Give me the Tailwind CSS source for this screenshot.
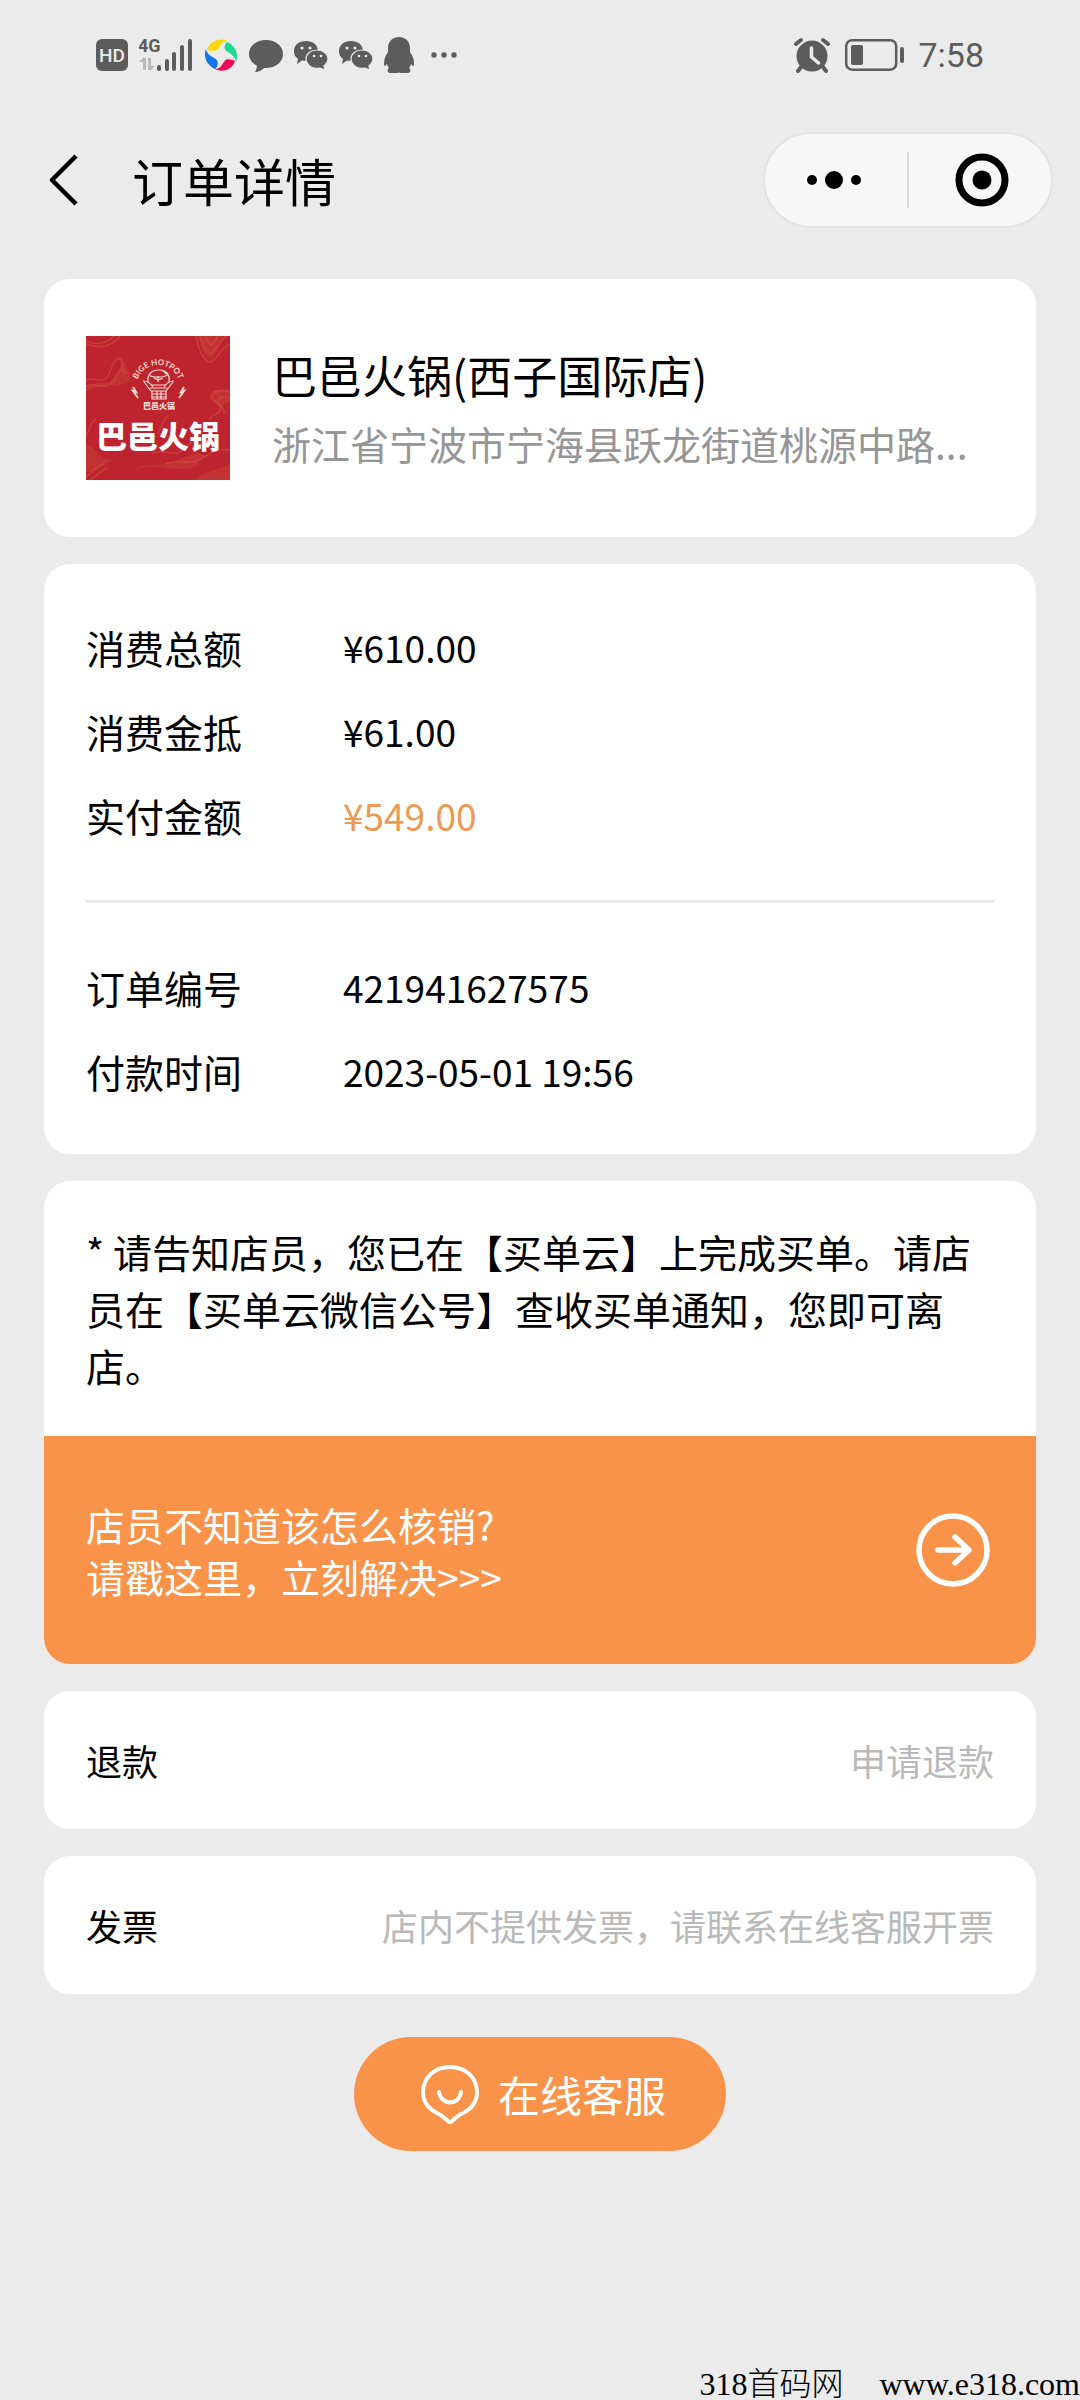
<!DOCTYPE html>
<html lang="zh-CN">
<head>
<meta charset="utf-8">
<meta name="viewport" content="width=device-width, initial-scale=1">
<title>订单详情</title>
<script src="https://cdn.jsdelivr.net/npm/@tailwindcss/browser@4"></script>
</head>
<body class="flex min-h-screen flex-col bg-[#ebebeb] font-['Noto_Sans_CJK_SC',sans-serif] text-black">

<!-- Status bar -->
<div class="flex h-[110px] items-center justify-between px-24 font-[Roboto,'Noto_Sans_CJK_SC',sans-serif] text-[#5c5c5c]">
  <div class="flex items-center gap-[11px]">
    <svg class="h-8 w-8" viewBox="0 0 32 32" role="img" aria-label="HD"><rect width="32" height="32" rx="6" fill="currentColor"/><text x="16" y="23" text-anchor="middle" font-size="19" font-weight="500" fill="#ebebeb">HD</text></svg>
    <svg class="h-9 w-[54px]" viewBox="0 0 54 36" fill="currentColor" role="img" aria-label="4G">
      <text x="-1" y="15" font-size="18" font-weight="700" font-family="Roboto">4G</text>
      <g fill="#b9b9b9"><path d="M4 21h3v12H4zM0 25l5-5v5zM9 21h3v12H9zM11 34v-5h5z"/></g>
      <g stroke="currentColor" stroke-width="4" stroke-linecap="round"><path d="M20 30v2M28 24v8M35 17v15M43 10v22M51 4v28"/></g>
    </svg>
    <svg class="h-9 w-[34px]" viewBox="0 0 36 36" aria-hidden="true">
      <path d="M3 13C6 4 15-1 25 3 19 4 18 7 15 12 11 15 7 13 3 13Z" fill="#fbd80f"/>
      <path d="M24 4C33 8 37 16 34 25 32 19 29 17 24 14 20 11 22 8 24 4Z" fill="#1fd996"/>
      <path d="M33 24C30 33 21 37 12 33 18 32 19 28 22 24 25 21 29 23 33 24Z" fill="#ee0b5b"/>
      <path d="M12 33C3 29-1 20 2 12 4 18 7 19 12 22 16 25 15 29 12 33Z" fill="#1476ea"/>
    </svg>
    <svg class="h-9 w-[34px]" viewBox="0 0 34 36" fill="currentColor" aria-hidden="true"><path d="M17 3c9.500 0 17 6 17 14s-7.500 14-17 14h-2c-2 2-5 4-9 4 1-2 2-4 2-6-5-3-8-7-8-12C0 9 7.500 3 17 3Z"/></svg>
    <svg class="h-9 w-[34px]" viewBox="0 0 34 36" fill="currentColor" aria-hidden="true">
      <path d="M12 4c7 0 12 4 12 10s-5 10-12 10l-4-.6L3 27l1-5c-3-2-4-5-4-8C0 8 5 4 12 4Z"/>
      <path d="M23 13c6 0 11 4 11 9 0 3-2 5-4 7l1 4-5-2-3 .4c-6 0-11-4-11-9.400s5-9 11-9Z" stroke="#ebebeb" stroke-width="1.200"/>
      <g fill="#ebebeb"><circle cx="8" cy="11" r="1.600"/><circle cx="16" cy="11" r="1.600"/><circle cx="20" cy="19" r="1.300"/><circle cx="27" cy="19" r="1.300"/></g>
    </svg>
    <svg class="h-9 w-[34px]" viewBox="0 0 34 36" fill="currentColor" aria-hidden="true">
      <path d="M12 4c7 0 12 4 12 10s-5 10-12 10l-4-.6L3 27l1-5c-3-2-4-5-4-8C0 8 5 4 12 4Z"/>
      <path d="M23 13c6 0 11 4 11 9 0 3-2 5-4 7l1 4-5-2-3 .4c-6 0-11-4-11-9.400s5-9 11-9Z" stroke="#ebebeb" stroke-width="1.200"/>
      <g fill="#ebebeb"><circle cx="8" cy="11" r="1.600"/><circle cx="16" cy="11" r="1.600"/><circle cx="20" cy="19" r="1.300"/><circle cx="27" cy="19" r="1.300"/></g>
    </svg>
    <svg class="h-9 w-[30px]" viewBox="0 0 30 36" fill="currentColor" aria-hidden="true"><path d="M15 0c7 0 11 5 11 11v4c3 4 4 8 4 12 0 2-1 3-3 0-.5 2-1 3-2 4 2 1 2 5-1 5h-7l-2-.6-2 .6H6c-3 0-3-4-1-5-1-1-1.500-2-2-4-2 3-3 2-3 0 0-4 1-8 4-12v-4C4 5 8 0 15 0Z"/></svg>
    <svg class="ml-1 h-9 w-7" viewBox="0 0 28 36" fill="currentColor" aria-hidden="true"><circle cx="5" cy="18" r="2.700"/><circle cx="15" cy="18" r="2.700"/><circle cx="25" cy="18" r="2.700"/></svg>
  </div>
  <div class="flex items-center gap-[14px]">
    <svg class="h-9 w-9" viewBox="0 0 36 36" aria-hidden="true">
      <circle cx="18" cy="19" r="15.500" fill="currentColor"/>
      <path d="M2 7l5-4M34 7l-5-4" stroke="#ebebeb" stroke-width="8" stroke-linecap="round"/>
      <path d="M2 7l5-4M34 7l-5-4M7 30l-3 4M29 30l3 4" stroke="currentColor" stroke-width="4" stroke-linecap="round"/>
      <path d="M17.500 11v9l7 6" fill="none" stroke="#ebebeb" stroke-width="3.500" stroke-linecap="round" stroke-linejoin="round"/>
    </svg>
    <svg class="h-9 w-[60px]" viewBox="0 0 60 36" aria-hidden="true"><rect x="2.200" y="3.200" width="50" height="29.500" rx="6" fill="none" stroke="currentColor" stroke-width="2.500"/><rect x="7" y="8" width="12" height="20" rx="2" fill="currentColor"/><rect x="56" y="10" width="4" height="16" rx="2" fill="currentColor"/></svg>
    <span class="text-[34px] leading-9">7:58</span>
  </div>
</div>

<!-- Title bar -->
<header class="flex h-[169px] items-start justify-between pt-[22px] pr-[27px] pl-11">
  <div class="flex h-24 items-center gap-12">
    <button type="button" aria-label="返回" class="flex h-16 w-10 items-center justify-center">
      <svg class="h-[54px] w-8" viewBox="0 0 32 54" fill="none" stroke="currentColor" stroke-width="4.500" stroke-linejoin="round"><path d="M28 3 4 27l24 24"/></svg>
    </button>
    <h1 class="text-[51px] leading-[60px]">订单详情</h1>
  </div>
  <div class="flex h-24 w-[290px] items-center rounded-full border-2 border-[#e2e2e2] bg-[#f7f7f7]">
    <button type="button" aria-label="更多" class="flex flex-1 items-center justify-center gap-2 pr-1">
      <span class="size-[10px] rounded-full bg-black"></span><span class="size-[18px] rounded-full bg-black"></span><span class="size-[10px] rounded-full bg-black"></span>
    </button>
    <span class="h-14 w-[2px] bg-[#dcdcdc]"></span>
    <button type="button" aria-label="关闭" class="flex flex-1 items-center justify-center pl-1">
      <svg class="size-[54px]" viewBox="0 0 54 54"><circle cx="27" cy="27" r="23" fill="none" stroke="#000" stroke-width="7"/><circle cx="27" cy="27" r="9.500"/></svg>
    </button>
  </div>
</header>

<main class="flex flex-col gap-[27px] px-11">

  <section class="flex items-center gap-[42px] rounded-[26px] bg-white px-[42px] py-[57px]">
    <svg class="size-36 shrink-0" viewBox="0 0 144 144" role="img" aria-label="巴邑火锅">
      <rect width="144" height="144" fill="#bd242f"/>
      <g fill="none" stroke="#cf5145" stroke-opacity=".6" stroke-width="1.500">
        <path d="M0 4c8 6 20 4 28-4M0 8c14 6 26 2 34-8M110 0c2 10 6 24 14 26 8-2 10-14 20-18M114 0c3 8 6 16 11 18 5-4 8-12 16-18M119 0c2 5 4 8 6 9 3-2 5-5 7-9M0 44c8-4 14 4 20-2s6-18 14-20c4 4 0 12 6 16M0 50c10-4 16 4 24-2s6-14 12-14M144 56c-8-2-16-2-18 4s10 6 8 14c-2 6-10 4-10 10M144 62c-6-2-12 0-12 4s8 6 6 12M0 100c4-6 4-14 10-18M0 140c8-2 8-10 18-12M4 144c8-4 10-10 18-12M66 118c8-6 20 2 28-2s10-14 22-12M80 128c12-6 18 2 32-4s14-12 32-10M72 98c4-8 4-14 10-18"/>
      </g>
      <g fill="#cf4a3c" fill-opacity=".4">
        <path d="M0 50c14-6 20 0 28-6 6-5 4-18 12-20-2 10 6 12 4 20-8 10-30 2-44 12ZM144 54c-12-3-22 2-20 8s12 4 10 14c4-4 2-10 10-10ZM48 134c14-10 24-2 40-8s18-12 34-6c-10 2-8 12-22 13s-36-5-52 1ZM0 108c10 2 10 14 26 16-8 4-12 12-26 12ZM110 144c8-10 20-8 34-16v16ZM112 0c4 14 8 22 13 23 6-4 6-14 16-23Z"/>
      </g>
      <g fill="none" stroke="#f6d9cf" stroke-width="1.200">
        <path id="crest-arc" d="M50 51a22 22 0 0 1 44 0" stroke="none"/>
        <path d="M62 46c-1-8 4-12 11-12s11 4 10 12M63 39c4 3 16 3 19-1M68 42l4 2 5-2M72 40v6M76 34l6 5M57 45c5 0 8 3 10 6M88 45c-5 0-8 3-10 6M58 46l7 9h15l7-9M65 49h15M64 52l17 0M66 55v8h14v-8M66 58h14M66 61h14M71 55v8M75 55v8"/>
        <path d="M47 51l3 5-3-1 5 7M98 51l-3 5 3-1-5 7" stroke-width="2"/>
      </g>
      <text font-size="8" font-family="Lato, sans-serif" font-weight="700" fill="#f6d9cf"><textPath href="#crest-arc" startOffset="50%" text-anchor="middle">BIGE HOTPOT</textPath></text>
      <text x="73" y="73" text-anchor="middle" font-size="8" font-weight="900" fill="#f6e4dc">巴邑火锅</text>
      <text x="72" y="112" text-anchor="middle" font-size="31" font-weight="900" fill="#fff">巴邑火锅</text>
    </svg>
    <div class="min-w-0 flex-1">
      <h2 class="text-[45px] leading-[70px]">巴邑火锅(西子国际店)</h2>
      <p class="text-[39px] leading-[66px] whitespace-nowrap text-[#969696]">浙江省宁波市宁海县跃龙街道桃源中路...</p>
    </div>
  </section>

  <section class="rounded-[26px] bg-white px-[42px] py-[41px]">
    <dl class="grid grid-cols-[257px_1fr] text-[39px] leading-[84px]">
      <dt>消费总额</dt><dd class="text-[37px]">¥610.00</dd>
      <dt>消费金抵</dt><dd class="text-[37px]">¥61.00</dd>
      <dt>实付金额</dt><dd class="text-[37px] text-[#ea9a52]">¥549.00</dd>
    </dl>
    <hr class="mt-[43px] mb-[42px] border-t-[3px] border-[#e9e9e9]">
    <dl class="grid grid-cols-[257px_1fr] text-[39px] leading-[84px]">
      <dt>订单编号</dt><dd class="text-[37px]">421941627575</dd>
      <dt>付款时间</dt><dd class="text-[37px]">2023-05-01 19:56</dd>
    </dl>
  </section>

  <section class="overflow-hidden rounded-[26px] bg-white text-[39px]">
    <p class="px-[42px] py-[42px] leading-[57px]">* 请告知店员，您已在【买单云】上完成买单。请店员在【买单云微信公号】查收买单通知，您即可离店。</p>
    <a href="#help" class="flex items-center justify-between bg-[#f99349] px-[42px] py-[62px] leading-[52px] text-white">
      <span>店员不知道该怎么核销?<br>请戳这里，立刻解决&gt;&gt;&gt;</span>
      <svg class="size-20 shrink-0" viewBox="0 0 80 80" fill="none" stroke="currentColor" stroke-width="5.500" stroke-linecap="round" stroke-linejoin="round" aria-hidden="true"><circle cx="39" cy="40" r="34"/><path d="M24 40h31M41 27l14 13-14 13"/></svg>
    </a>
  </section>

  <section class="flex items-center justify-between rounded-[26px] bg-white px-[42px] py-[42px] text-[36px] leading-[54px]">
    <h2>退款</h2>
    <button type="button" class="text-[#b9b9b9]">申请退款</button>
  </section>

  <section class="flex items-center justify-between rounded-[26px] bg-white px-[42px] py-[42px] text-[36px] leading-[54px]">
    <h2>发票</h2>
    <p class="text-[#b9b9b9]">店内不提供发票，请联系在线客服开票</p>
  </section>

  <button type="button" class="mt-4 flex h-[114px] items-center gap-[18px] self-center rounded-full bg-[#f99349] pr-[60px] pl-[66px] text-[42px] leading-[60px] text-white">
    <svg class="size-[60px]" viewBox="0 0 60 60" fill="none" stroke="currentColor" stroke-width="4" stroke-linecap="round" stroke-linejoin="round" aria-hidden="true"><path d="M30 3C46 3 57 14 57 28 57 38 51 45 43 49 37 52 34 55 30 59 26 55 23 52 17 49 9 45 3 38 3 28 3 14 14 3 30 3Z"/><path d="M19 28c2 14 20 14 22 0"/></svg>
    <span>在线客服</span>
  </button>
</main>

<footer class="mt-auto flex justify-end gap-9 font-['Liberation_Serif','Noto_Sans_CJK_SC',serif] text-[32px] leading-8 font-light">
  <span>318首码网</span>
  <a href="#site">www.e318.com</a>
</footer>
</body>
</html>
